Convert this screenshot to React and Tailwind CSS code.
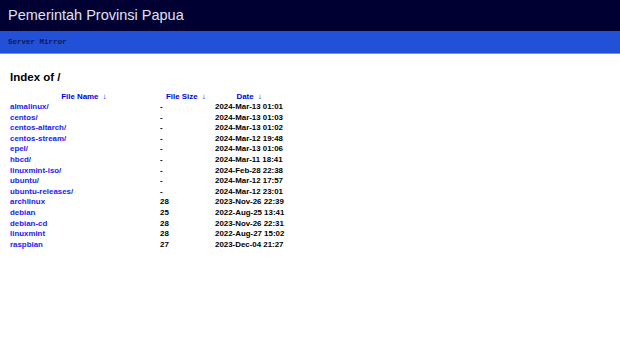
export default function App() {
  const rows = [
    ["almalinux/", "-", "2024-Mar-13 01:01"],
    ["centos/", "-", "2024-Mar-13 01:03"],
    ["centos-altarch/", "-", "2024-Mar-13 01:02"],
    ["centos-stream/", "-", "2024-Mar-12 19:48"],
    ["epel/", "-", "2024-Mar-13 01:06"],
    ["hbcd/", "-", "2024-Mar-11 18:41"],
    ["linuxmint-iso/", "-", "2024-Feb-28 22:38"],
    ["ubuntu/", "-", "2024-Mar-12 17:57"],
    ["ubuntu-releases/", "-", "2024-Mar-12 23:01"],
    ["archlinux", "28", "2023-Nov-26 22:39"],
    ["debian", "25", "2022-Aug-25 13:41"],
    ["debian-cd", "28", "2023-Nov-26 22:31"],
    ["linuxmint", "28", "2022-Aug-27 15:02"],
    ["raspbian", "27", "2023-Dec-04 21:27"],
  ];
  return (
    <div className="w-[620px] h-[343px] bg-white" style={{ fontFamily: '"Liberation Sans", Arial, sans-serif' }}>
      <div className="h-[31px] bg-[#000033] flex items-center pl-[8px]">
        <span className="text-[14.5px] text-[#e0e0f0] leading-none">Pemerintah Provinsi Papua</span>
      </div>
      <div className="h-[23px] bg-[#2250d6] border-b border-[#6f8ff0] flex items-center pl-[8px] pt-[2px]">
        <span className="text-[7.5px] font-bold text-[#0b1a5a]" style={{ fontFamily: '"Liberation Mono", "Courier New", monospace' }}>Server Mirror</span>
      </div>
      <div className="pl-[10px] pt-[18px]">
        <h1 className="text-[11.5px] font-bold text-black leading-none">Index of /</h1>
        <table className="mt-[8px] text-[7.9px] font-bold border-collapse leading-[10.6px] whitespace-nowrap">
          <thead>
            <tr>
              <th className="w-[148px] text-center text-[#0000ee] p-0">File Name&nbsp; ↓</th>
              <th className="w-[56px] text-center text-[#0000ee] p-0">File Size&nbsp; ↓</th>
              <th className="w-[67px] text-center text-[#0000ee] p-0">Date&nbsp; ↓</th>
            </tr>
          </thead>
          <tbody>
            {rows.map((r) => (
              <tr key={r[0]}>
                <td className="p-0 text-[#2020ff]">{r[0]}</td>
                <td className="p-0 pl-[2px] text-black">{r[1]}</td>
                <td className="p-0 pl-[1px] text-black">{r[2]}</td>
              </tr>
            ))}
          </tbody>
        </table>
      </div>
    </div>
  );
}
